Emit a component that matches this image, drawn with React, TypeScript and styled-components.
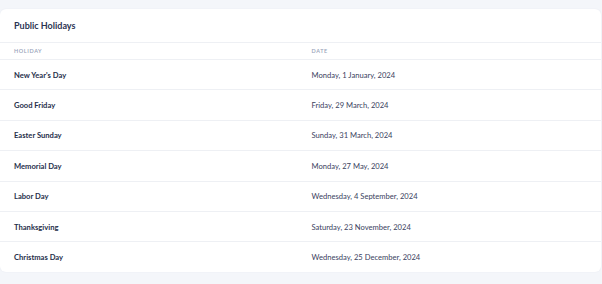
import styled, { createGlobalStyle } from "styled-components";

const GlobalStyle = createGlobalStyle`
    body {
        margin: 0;
        background: #f4f6fa;
        font-family: "Lato", "Noto Sans", sans-serif;
    }
`;

const Page = styled.div`
    padding: 9px 1px 12px 0;
`;

const Card = styled.section`
    background: #ffffff;
    border-radius: 6px;
    box-shadow: 0 0 2px rgba(30, 40, 80, 0.06);
    overflow: hidden;
`;

const CardHeader = styled.header`
    height: 34px;
    display: flex;
    align-items: center;
    padding: 0 14px;
    border-bottom: 1px solid #eef0f4;
    box-sizing: border-box;

    h2 {
        margin: 0;
        font-size: 9px;
        font-weight: 700;
        color: #2b3452;
    }
`;

const Table = styled.table`
    width: 100%;
    border-collapse: collapse;
`;

const HeadCell = styled.th<{ $first?: boolean }>`
    height: 16px;
    padding: 0 0 0 ${(p) => (p.$first ? "14px" : "11px")};
    text-align: left;
    font-size: 5.5px;
    font-weight: 600;
    letter-spacing: 0.6px;
    text-transform: uppercase;
    color: #98a3b9;
    border-bottom: 1px solid #eef0f4;
    width: 50%;
`;

const Row = styled.tr`
    height: 30.4px;

    & + & td {
        border-top: 1px solid #eef0f4;
    }
`;

const NameCell = styled.td`
    padding: 0 0 0 14px;
    font-size: 7.6px;
    font-weight: 700;
    color: #252e4a;
`;

const DateCell = styled.td`
    padding: 0 0 0 11px;
    font-size: 7.6px;
    font-weight: 400;
    color: #3a4260;
`;

const holidays = [
    { name: "New Year's Day", date: "Monday, 1 January, 2024" },
    { name: "Good Friday", date: "Friday, 29 March, 2024" },
    { name: "Easter Sunday", date: "Sunday, 31 March, 2024" },
    { name: "Memorial Day", date: "Monday, 27 May, 2024" },
    { name: "Labor Day", date: "Wednesday, 4 September, 2024" },
    { name: "Thanksgiving", date: "Saturday, 23 November, 2024" },
    { name: "Christmas Day", date: "Wednesday, 25 December, 2024" },
];

const App = () => {
    return (
        <>
            <GlobalStyle/>
            <Page>
                <Card>
                    <CardHeader>
                        <h2>Public Holidays</h2>
                    </CardHeader>
                    <Table>
                        <thead>
                            <tr>
                                <HeadCell $first>Holiday</HeadCell>
                                <HeadCell>Date</HeadCell>
                            </tr>
                        </thead>
                        <tbody>
                            {holidays.map((h) => (
                                <Row key={h.name}>
                                    <NameCell>{h.name}</NameCell>
                                    <DateCell>{h.date}</DateCell>
                                </Row>
                            ))}
                        </tbody>
                    </Table>
                </Card>
            </Page>
        </>
    );
};

export default App;
